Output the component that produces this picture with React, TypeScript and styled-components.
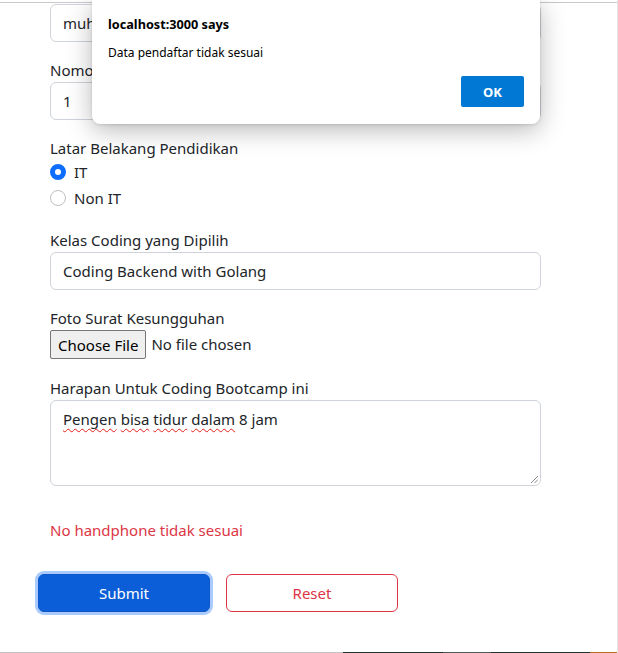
import React from "react";
import styled, { createGlobalStyle } from "styled-components";

const Global = createGlobalStyle`
  html, body { margin: 0; padding: 0; background: #fff; }
  body { font-family: "Noto Sans", "Open Sans", sans-serif; color: #212529; }
  * { box-sizing: border-box; }
`;

const Frame = styled.div`
  position: relative;
  width: 618px;
  height: 653px;
  display: flex;
  flex-direction: column;
  overflow: hidden;
  border-right: 1px solid #e4e4e4;
  background: #fff;
`;

const TopRule = styled.div`
  height: 1px;
  margin-top: 2px;
  background: #c9c9c9;
  flex: none;
`;

const Content = styled.main`
  flex: 1;
  padding: 1px 0 0 38px;
  width: 553px;
  font-size: 15px;
`;

const Field = styled.div<{ $mb?: number }>`
  padding: 0 12px;
  margin-bottom: ${(p) => (p.$mb ?? 16)}px;
`;

const Label = styled.label`
  display: block;
  font-size: 15px;
  line-height: 24px;
  color: #212529;
`;

const Input = styled.div`
  height: 38px;
  border: 1px solid #ced4da;
  border-radius: 6px;
  padding: 6px 12px;
  font-size: 15px;
  line-height: 24px;
  color: #212529;
  background: #fff;
`;

const CheckRow = styled.div`
  display: flex;
  align-items: flex-start;
  gap: 8px;
  min-height: 24px;
  margin-bottom: 2px;
  font-size: 15px;
  line-height: 24px;
`;

const Radio = styled.span<{ $checked?: boolean }>`
  width: 16px;
  height: 16px;
  margin-top: 4px;
  border-radius: 50%;
  flex: none;
  background: #fff;
  border: ${(p) => (p.$checked ? "5px solid #0d6efd" : "1px solid #bfbfbf")};
`;

const RadioGroup = styled.div`
  padding: 0 12px;
  margin-bottom: 18px;
`;

const FileRow = styled.div`
  display: flex;
  align-items: flex-start;
  gap: 5px;
  height: 30px;
  font-size: 15px;
  color: #212529;
`;

const FileButton = styled.span`
  height: 29px;
  padding: 0 7px;
  display: flex;
  align-items: center;
  background: #efefef;
  border: 1px solid #767676;
  border-radius: 2px;
  color: #000;
  font-size: 15px;
`;

const FileText = styled.span`
  line-height: 29px;
`;

const TextArea = styled.div`
  position: relative;
  height: 86px;
  border: 1px solid #ced4da;
  border-radius: 6px;
  padding: 6px 12px;
  font-size: 15px;
  line-height: 24px;
  color: #212529;
`;

const Misspelled = styled.span`
  text-decoration: underline wavy #e0201c;
  text-decoration-thickness: 1px;
  text-underline-offset: 3px;
  text-decoration-skip-ink: none;
`;

const Grip = styled.svg`
  position: absolute;
  right: 2px;
  bottom: 2px;
`;

const ErrorText = styled.p`
  margin: 32px 0 0;
  padding: 0 12px;
  font-size: 15px;
  line-height: 24px;
  color: #dc3545;
`;

const ButtonRow = styled.div`
  display: flex;
  gap: 16px;
  margin-top: 32px;
`;

const Btn = styled.button<{ $variant: "primary" | "danger" }>`
  width: 172px;
  height: 38px;
  border-radius: 6px;
  font-family: inherit;
  font-size: 15px;
  cursor: pointer;
  ${(p) =>
    p.$variant === "primary"
      ? `background:#0b5ed7;border:1px solid #0a58ca;color:#fff;box-shadow:0 0 0 3px #a9cafb;`
      : `background:#fff;border:1px solid #dc3545;color:#dc3545;`}
`;

const BottomStrip = styled.div`
  display: flex;
  height: 1px;
  flex: none;
`;

const Seg = styled.div<{ $w: number; $c: string }>`
  width: ${(p) => p.$w}px;
  background: ${(p) => p.$c};
`;

const Dialog = styled.div`
  position: absolute;
  top: 0;
  left: 92px;
  width: 448px;
  height: 124px;
  background: #fff;
  border-radius: 0 0 8px 8px;
  box-shadow: 0 6px 26px rgba(0, 0, 0, 0.28), 0 1px 3px rgba(0, 0, 0, 0.12);
  padding: 15px 16px 0 16px;
  display: flex;
  flex-direction: column;
  font-family: "Noto Sans", "Open Sans", sans-serif;
`;

const DialogTitle = styled.div`
  font-weight: 700;
  font-size: 12.7px;
  line-height: 18px;
  color: #000;
`;

const DialogMessage = styled.div`
  margin-top: 11px;
  font-size: 12px;
  line-height: 18px;
  color: #000;
`;

const DialogActions = styled.div`
  display: flex;
  justify-content: flex-end;
  margin-top: 14px;
`;

const OkButton = styled.button`
  width: 63px;
  height: 31px;
  background: #0078d4;
  border: none;
  border-radius: 2px;
  color: #fff;
  font-family: inherit;
  font-weight: 700;
  font-size: 13px;
`;

export default function App() {
  return (
    <>
      <Global />
      <Frame>
        <TopRule />
        <Content>
          <Field>
            <Input>muh</Input>
          </Field>
          <Field>
            <Label>Nomor Handphone</Label>
            <Input>1</Input>
          </Field>
          <Field $mb={0}>
            <Label>Latar Belakang Pendidikan</Label>
          </Field>
          <RadioGroup>
            <CheckRow>
              <Radio $checked />
              <span>IT</span>
            </CheckRow>
            <CheckRow>
              <Radio />
              <span>Non IT</span>
            </CheckRow>
          </RadioGroup>
          <Field>
            <Label>Kelas Coding yang Dipilih</Label>
            <Input>Coding Backend with Golang</Input>
          </Field>
          <Field>
            <Label>Foto Surat Kesungguhan</Label>
            <FileRow>
              <FileButton>Choose File</FileButton>
              <FileText>No file chosen</FileText>
            </FileRow>
          </Field>
          <Field $mb={0}>
            <Label>Harapan Untuk Coding Bootcamp ini</Label>
            <TextArea>
              <Misspelled>Pengen</Misspelled> <Misspelled>bisa</Misspelled>{" "}
              <Misspelled>tidur</Misspelled> <Misspelled>dalam</Misspelled> 8 jam
              <Grip width="8" height="8" viewBox="0 0 8 8">
                <line x1="1" y1="8" x2="8" y2="1" stroke="#8a8a8a" strokeWidth="1" />
                <line x1="4.5" y1="8" x2="8" y2="4.5" stroke="#8a8a8a" strokeWidth="1" />
              </Grip>
            </TextArea>
          </Field>
          <ErrorText>No handphone tidak sesuai</ErrorText>
          <ButtonRow>
            <Btn $variant="primary">Submit</Btn>
            <Btn $variant="danger">Reset</Btn>
          </ButtonRow>
        </Content>
        <BottomStrip>
          <Seg $w={343} $c="#c2c2c2" />
          <Seg $w={100} $c="#22332e" />
          <Seg $w={48} $c="#4d5c57" />
          <Seg $w={99} $c="#22332e" />
          <Seg $w={27} $c="#b86c22" />
        </BottomStrip>
        <Dialog>
          <DialogTitle>localhost:3000 says</DialogTitle>
          <DialogMessage>Data pendaftar tidak sesuai</DialogMessage>
          <DialogActions>
            <OkButton>OK</OkButton>
          </DialogActions>
        </Dialog>
      </Frame>
    </>
  );
}
